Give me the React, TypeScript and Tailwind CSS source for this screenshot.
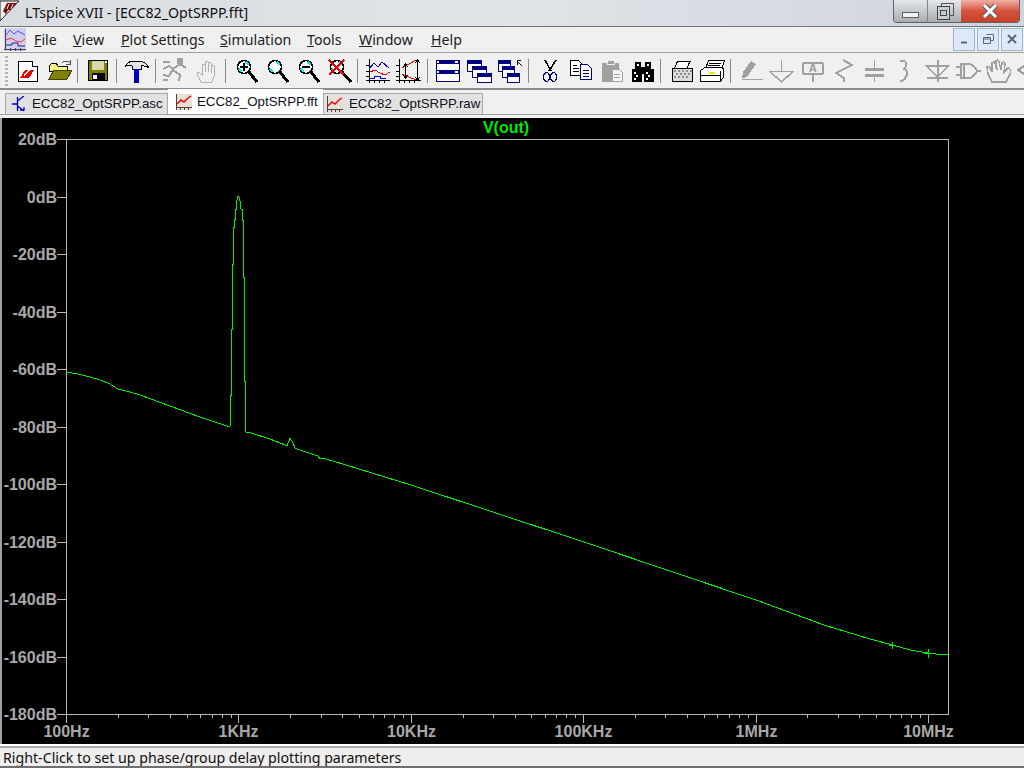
import * as React from 'react'

const G = '#a0a0a0'
const NAVY = '#000080'

// curve points taken off the screenshot, in page pixels
const curve =
  '66,372 78,374 90,377 100,380 108,383 118,389 130,392 140,395 170,406 200,417 215,422 230,427 230.5,395 231.5,395 231.5,329 232.5,329 232.5,264 233.5,264 233.5,227 234.5,227 234.5,219 235.5,219 235.5,209 236.5,209 236.5,202 238,196 239,197 240,201 241,209 242.5,209 242.5,220 243.5,220 243.5,277 244.5,277 244.5,381 245.5,381 245.5,432 251,433 270,439 285,445 287,446 290,438 293,443 295,448 297,449 318,456 320,459 322,458 333,461 411,485 584,542 756,600 824,625 870,639 893,645 910,650 928,653 936,654 948,655'

const yLabels = ['20dB', '0dB', '-20dB', '-40dB', '-60dB', '-80dB', '-100dB', '-120dB', '-140dB', '-160dB', '-180dB']
const xLabels = ['100Hz', '1KHz', '10KHz', '100KHz', '1MHz', '10MHz']
const minors = [2, 3, 4, 5, 6, 7, 8, 9]

const Mag = ({ children, handle = 27 }: { children?: React.ReactNode; handle?: number }) => (
  <>
    <line x1="19" y1="17" x2={handle} y2="27" stroke="#000" strokeWidth="3" />
    <circle cx="14" cy="12" r="6.5" fill="#fff" stroke="#000" strokeWidth="1.5" />
    <path d="M9 14L12 17M16 7L19 10" stroke="#00e8f0" strokeWidth="1.5" fill="none" />
    {children}
  </>
)

const Win = ({ x, y, w, h }: { x: number; y: number; w: number; h: number }) => (
  <>
    <rect x={x + 0.5} y={y + 0.5} width={w} height={h} fill="#fff" stroke={NAVY} />
    <rect x={x} y={y} width={w + 1} height="4" fill={NAVY} />
  </>
)

const icons: React.ReactNode[] = [
  // new schematic
  <>
    <path d="M6.5 6.5H20.5L25.5 11.5V26.5H6.5Z" fill="#fff" stroke="#000" />
    <path d="M20.5 6.5V11.5H25.5" fill="#fff" stroke="#000" />
    <path d="M8 23L13 15H22L17 23Z" fill="#f00000" />
    <path d="M12 20L19 14" stroke="#fff" strokeWidth="1.5" />
  </>,
  // open
  <>
    <path d="M6 11L9 8H13L15 11H24V16H6Z" fill="#f6f67c" stroke="#000" />
    <path d="M6 24L11 15H29L24 24Z" fill="#808000" stroke="#404000" />
    <path d="M19 8Q23 4 27 8M27 5V9H23" stroke="#505050" fill="none" />
  </>,
  // save
  <>
    <rect x="6.5" y="5.5" width="19" height="20" fill="#808000" stroke="#000" />
    <rect x="10" y="6" width="12" height="9" fill="#d8d8b0" />
    <rect x="10" y="18" width="13" height="8" fill="#000" />
    <rect x="11" y="20" width="4" height="4" fill="#fff" />
    <rect x="23" y="6" width="2" height="2" fill="#fff" />
  </>,
  // hammer
  <>
    <path d="M4.5 11Q6 7 12 6H19Q25 7 28 13Q24 10 20 11V14H11V11Q7 9 4.5 11Z" fill="#e4e4e4" stroke="#000" />
    <rect x="13" y="14" width="5" height="14" fill="#0000c8" />
    <rect x="13" y="24" width="2" height="4" fill="#000080" />
  </>,
  // run
  <g stroke={G} strokeWidth="2" fill="none">
    <path d="M3 7H10M3 14L9 11L13 14L20 9L26 13M13 14L9 21L3 20M13 15L20 20L19 26M3 25H8" />
    <rect x="18" y="4" width="4" height="4" fill={G} />
  </g>,
  // halt hand
  <path
    d="M10 27L6 19Q6 16 9 18L11 20V10Q12.5 8 14 10V17V7Q15.5 5 17 7V17V8Q18.5 6 20 8V18V11Q21.5 9 23 11V21L21 27Z"
    fill="#f0f0f0"
    stroke="#b0b0b0"
  />,
  // zoom in, pan, zoom out, zoom cancel
  <Mag>
    <path d="M10 12H18M14 8V16" stroke="#000" strokeWidth="2" />
  </Mag>,
  <Mag />,
  <Mag>
    <path d="M10 12H18" stroke="#000" strokeWidth="2" />
  </Mag>,
  <Mag handle={28}>
    <path d="M6 5L21 20M21 5L6 20" stroke="#f00000" strokeWidth="2" />
  </Mag>,
  // autoscale
  <>
    <path d="M7.5 4V28M4 25.5H28M12.5 25V28M17.5 25V28M22.5 25V28M4 10.5H7M4 16.5H7M4 21.5H7" stroke="#000" fill="none" />
    <polyline points="7,14 12,8 16,12 20,7 27,13" stroke="#0000c0" fill="none" />
    <polyline points="8,17 13,15 18,18 23,20 28,17" stroke="#f00000" fill="none" />
    <polyline points="8,23 12,23 12,21 18,21 18,23 24,23" stroke="#0000c0" fill="none" />
  </>,
  // plot settings
  <>
    <path d="M6.5 4V28M3 25.5H28M11.5 25V28M16.5 25V28M21.5 25V28M3 10.5H6M3 16.5H6M3 21.5H6" stroke="#000" fill="none" />
    <path d="M9 13L23 5M9 19L23 25" stroke="#f00000" fill="none" />
    <path d="M12.5 10V22M10 12L12.5 9L15 12M10 20L12.5 23L15 20M24.5 6V24M22 8L24.5 5L27 8M22 22L24.5 25L27 22" stroke="#000" fill="none" />
  </>,
  // tile
  <>
    <rect x="4.5" y="5.5" width="23" height="21" fill="#fff" stroke={NAVY} />
    <rect x="4" y="5" width="24" height="4" fill={NAVY} />
    <rect x="4" y="15" width="24" height="4" fill={NAVY} />
    <rect x="23" y="6" width="3" height="2" fill="#fff" />
    <rect x="23" y="16" width="3" height="2" fill="#fff" />
    <rect x="5" y="6" width="2" height="2" fill="#fff" />
    <rect x="5" y="16" width="2" height="2" fill="#fff" />
  </>,
  // cascade
  <>
    <Win x={4} y={5} w={14} h={11} />
    <Win x={9} y={11} w={14} h={11} />
    <Win x={14} y={18} w={14} h={9} />
  </>,
  // close all
  <>
    <Win x={4} y={5} w={12} h={11} />
    <Win x={8} y={11} w={12} h={11} />
    <Win x={13} y={18} w={12} h={9} />
    <path d="M28 11L23 6M23.5 10V5.5H27" stroke="#000" fill="none" strokeWidth="1.2" />
  </>,
  // cut
  <>
    <path d="M12 5L18 16M23 5L16 16" stroke="#000" strokeWidth="1.6" />
    <ellipse cx="13.5" cy="22" rx="3" ry="4.5" fill="none" stroke={NAVY} strokeWidth="1.5" />
    <ellipse cx="20.5" cy="22" rx="3" ry="4.5" fill="none" stroke={NAVY} strokeWidth="1.5" />
  </>,
  // copy
  <>
    <path d="M6.5 5.5H14.5L18.5 9.5V20.5H6.5Z" fill="#fff" stroke="#000" />
    <path d="M9 10.5H13M9 13.5H15M9 16.5H15" stroke="#000" />
    <path d="M16.5 9.5H23.5L27.5 13.5V24.5H16.5Z" fill="#fff" stroke={NAVY} />
    <path d="M19 15.5H25M19 18.5H25M19 21.5H25" stroke={NAVY} />
  </>,
  // paste
  <>
    <rect x="7" y="8" width="17" height="19" rx="1" fill={G} />
    <rect x="12" y="5" width="7" height="4" fill={G} stroke="#f0f0f0" />
    <path d="M17.5 14.5H24.5L27.5 17.5V26.5H17.5Z" fill="#f4f4f4" stroke={G} />
    <path d="M19 19.5H25M19 22.5H25" stroke={G} />
  </>,
  // find
  <>
    <rect x="6" y="14" width="10" height="13" fill="#000" />
    <rect x="18" y="14" width="10" height="13" fill="#000" />
    <rect x="9" y="7" width="6" height="8" fill="#000" />
    <rect x="19" y="7" width="6" height="8" fill="#000" />
    <rect x="15" y="12" width="4" height="7" fill="#000" />
    <path d="M8 17h2v2h-2zM10 20h2v2h-2zM8 23h2v2h-2zM20 17h2v2h-2zM22 20h2v2h-2zM20 23h2v2h-2zM11 9h2v2h-2zM21 9h2v2h-2z" fill="#fff" />
  </>,
  // print preview
  <>
    <path d="M12.5 6.5H25L22 13H9.5Z" fill="#fff" stroke="#000" />
    <rect x="7.5" y="13.5" width="20" height="13" rx="1" fill="#dcdcdc" stroke="#000" />
    <path d="M9 15h2v2H9zM13 15h2v2h-2zM17 15h2v2h-2zM21 15h2v2h-2zM25 15h2v2h-2zM11 18h2v2h-2zM15 18h2v2h-2zM19 18h2v2h-2zM23 18h2v2h-2zM9 21h2v2H9zM13 21h2v2h-2zM17 21h2v2h-2zM21 21h2v2h-2z" fill="#909090" />
  </>,
  // print
  <>
    <path d="M12.5 5.5H28.5L26 13.5H9.5Z" fill="#fff" stroke="#000" />
    <path d="M13 8.5H25M12 10.5H24" stroke="#000" />
    <path d="M4.5 15.5L9 12.5H26L27.5 14V22L24.5 26.5H4.5Z" fill="#fff" stroke="#000" />
    <path d="M4.5 20.5H24.5V26M24.5 16V20" stroke="#000" fill="none" />
    <rect x="13" y="17" width="6" height="2" fill="#e8e800" />
  </>,
  // wire
  <>
    <path d="M7 23L8 17L16 6L21 9L12 22Z" fill={G} />
    <rect x="7" y="24" width="21" height="1" fill={G} />
  </>,
  // ground
  <path d="M15.5 5V16M4 16.5H27L15.5 27Z" stroke={G} strokeWidth="1.5" fill="none" />,
  // net label
  <>
    <rect x="6" y="8" width="20" height="11" rx="2" fill="none" stroke={G} strokeWidth="2" />
    <path d="M15.5 19V27" stroke={G} strokeWidth="2" />
    <text x="15.8" y="17" textAnchor="middle" fontFamily="'Liberation Mono', monospace" fontSize="12" fontWeight="700" fill={G}>
      A
    </text>
  </>,
  // resistor
  <polyline points="15,5 24,10 8,18 16,23 16,27" fill="none" stroke={G} strokeWidth="2" />,
  // capacitor
  <path d="M15 5V13H6V15H24V13H15M6 19H24V21H6ZM15 21V27" fill={G} stroke={G} />,
  // inductor
  <path d="M10 6Q17 5 16 10Q16 13 14 14Q19 16 16 22Q14 26 10 26" fill="none" stroke={G} strokeWidth="2" />,
  // diode
  <path d="M16.5 5V27M5 10.5H28L16.5 22ZM6 22.5H27" fill="none" stroke={G} strokeWidth="2" />,
  // component
  <path d="M9 9H16Q22 9 25 16Q22 23 16 23H9ZM4 12H9M4 20H9M25 16H29M12 9V23" fill="none" stroke={G} strokeWidth="2" />,
  // move hand
  <path
    d="M9 27L5 19L4 12Q5 10 7 13L9 17V8Q11 6 12 8L14 15L13 6Q15 4 16 7L18 15L19 8Q21 6 22 9L21 17L25 13Q29 14 27 19L23 27Z"
    fill="none"
    stroke={G}
    strokeWidth="1.5"
  />,
  // rotate, cut off by the window edge
  <polyline points="10,11 4,15 10,19" fill="none" stroke={G} strokeWidth="2" />,
]

// where the separators go, counted in buttons
const groups = [2, 1, 1, 2, 4, 2, 3, 4, 2, 11]

const PlotIcon = ({ big }: { big?: boolean }) =>
  big ? (
    <svg width="22" height="23" viewBox="0 0 22 23" className="shrink-0">
      <rect width="22" height="23" fill="#cfcfe8" />
      <path d="M1.5 1V22M0 21.5H22M6.5 20V23M11.5 20V23M16.5 20V23" stroke="#404060" fill="none" />
      <polyline points="2,7 6,2 10,6 14,3 21,7" stroke="#5050f0" fill="none" />
      <polyline points="2,12 7,10 12,13 17,14 21,11" stroke="#f03030" fill="none" />
      <polyline points="2,17 8,17 8,15 14,15 14,18 21,18" stroke="#2020a0" fill="none" />
    </svg>
  ) : (
    <svg width="16" height="16" viewBox="0 0 16 16" className="shrink-0">
      <rect width="16" height="16" fill="#e8e0d8" />
      <path d="M0.5 0V16M0 13.5H16M4.5 13V16M8.5 13V16M12.5 13V16" stroke="#504040" fill="none" />
      <polyline points="1,10 5,6 8,8 12,4 15,2" stroke="#f00000" fill="none" strokeWidth="1.4" />
    </svg>
  )

const Tab = ({ label, icon, className }: { label: string; icon: React.ReactNode; className: string }) => (
  <div className={`flex items-center text-[#101020] ${className}`}>
    {icon}
    <span>{label}</span>
  </div>
)

const idle = 'h-[21px] gap-[6px] bg-[#e2e2e2] border border-b-0 border-[#a8a8a8]'

export default function App() {
  let next = 0
  return (
    <div className="w-[1024px] h-[768px] flex flex-col overflow-hidden bg-[#f0f0f0] font-['Noto_Sans',sans-serif]">
      {/* window caption */}
      <div className="h-[27px] shrink-0 flex justify-between border-b border-[#70767c] bg-gradient-to-r from-[#d9dde2] via-[#e0e4e8] to-[#cdd4dc]">
        <div className="flex items-start">
          <svg width="20" height="22" viewBox="0 0 20 22" className="shrink-0">
            <path d="M0 1H19L0 21Z" fill="#f4f0f0" stroke="#202020" />
            <path d="M3 11L7 3H17L11 10H8L6 14Z" fill="#7a1010" />
            <path d="M9 4L7 9M13 4L11 9" stroke="#f4f0f0" />
          </svg>
          <span className="ml-[5px] mt-[1px] text-[14.2px] leading-[24px] text-[#101010]">LTspice XVII - [ECC82_OptSRPP.fft]</span>
        </div>
        <div className="flex h-[23px] mr-[4px] rounded-b-[4px] border border-t-0 border-[#5d6268] overflow-hidden">
          <div className="w-[34px] flex items-end justify-center pb-[4px] border-r border-[#7e858c] bg-gradient-to-b from-[#e6e8ea] to-[#a8adb2]">
            <div className="w-[17px] h-[6px] bg-[#f4f4f4] border border-[#5a6068]" />
          </div>
          <div className="w-[33px] flex items-center justify-center bg-gradient-to-b from-[#e6e8ea] to-[#a8adb2]">
            <svg width="18" height="18" viewBox="0 0 18 18">
              <rect x="5.5" y="1.5" width="12" height="12" fill="none" stroke="#555" />
              <rect x="1.5" y="4.5" width="12" height="13" fill="#c8ccd0" stroke="#444" />
              <rect x="4.5" y="8.5" width="6" height="5" fill="none" stroke="#444" />
            </svg>
          </div>
          <div className="w-[58px] flex items-center justify-center bg-gradient-to-b from-[#eeb0a6] via-[#d5523a] to-[#c8402a]">
            <svg width="16" height="14" viewBox="0 0 16 14">
              <path d="M2 1L14 13M14 1L2 13" stroke="#5a5a5a" strokeWidth="5" />
              <path d="M2 1L14 13M14 1L2 13" stroke="#fff" strokeWidth="3" />
            </svg>
          </div>
        </div>
      </div>

      {/* menu */}
      <div className="h-[26px] shrink-0 flex items-start border-b border-[#a0a0a0] text-[14.2px] leading-[25px] text-[#202020]">
        <div className="ml-[4px] mt-[1px]">
          <PlotIcon big />
        </div>
        <div className="ml-[8px] flex">
          <span className="w-[39px]">
            <span className="underline">F</span>ile
          </span>
          <span className="w-[48px]">
            <span className="underline">V</span>iew
          </span>
          <span className="w-[99px]">
            <span className="underline">P</span>lot Settings
          </span>
          <span className="w-[87px]">
            <span className="underline">S</span>imulation
          </span>
          <span className="w-[52px]">
            <span className="underline">T</span>ools
          </span>
          <span className="w-[72px]">
            <span className="underline">W</span>indow
          </span>
          <span>
            <span className="underline">H</span>elp
          </span>
        </div>
        <div className="ml-auto mt-[1px] mr-px flex gap-[2px]">
          {['min', 'restore', 'close'].map(k => (
            <div key={k} className="w-[22px] h-[23px] flex items-center justify-center bg-[#dce9f6] border border-[#a0b4c8]">
              <svg width="13" height="13" viewBox="0 0 13 13" stroke="#5c6a78" fill="none">
                {k === 'min' && <path d="M3 9.5H9" strokeWidth="2" />}
                {k === 'restore' && <path d="M4.5 1.5H11.5V7.5H9M1.5 4.5H8.5V10.5H1.5ZM1.5 6H8.5" />}
                {k === 'close' && <path d="M2 2L10 10M10 2L2 10" strokeWidth="2" />}
              </svg>
            </div>
          ))}
        </div>
      </div>

      {/* toolbar */}
      <div className="h-[37px] shrink-0 flex items-start pt-[2px] pl-[5px] overflow-hidden border-b-2 border-[#8c8c8c]">
        <div className="w-[3px] h-[30px] mt-[1px] mr-[4px] shrink-0 bg-[repeating-linear-gradient(to_bottom,#b4b4b4_0,#b4b4b4_2px,transparent_2px,transparent_4px)]" />
        {groups.map((count, g) => (
          <React.Fragment key={g}>
            {g > 0 && (
              <div className="w-[8px] shrink-0 pl-[3px]">
                <div className="w-px h-[24px] mt-[4px] bg-[#8a8a8a]" />
              </div>
            )}
            {icons.slice(next, (next += count)).map((icon, i) => (
              <svg key={i} width="31" height="32" viewBox="0 0 31 32" shapeRendering="crispEdges" className="shrink-0">
                {icon}
              </svg>
            ))}
          </React.Fragment>
        ))}
      </div>

      {/* document tabs */}
      <div className="h-[28px] shrink-0">
        <div className="h-[25px] flex items-end pl-[5px] border-b border-[#a0a0a0] font-['Liberation_Sans',sans-serif] text-[13.3px]">
          <Tab
            className={`${idle} w-[163px] pl-[6px]`}
            label="ECC82_OptSRPP.asc"
            icon={
              <svg width="14" height="16" viewBox="0 0 14 16" className="shrink-0">
                <path d="M5.5 1V15M0 8H5M5.5 5L12 0M5.5 10L12 15M8 14H12V11" stroke="#0000c0" fill="none" strokeWidth="1.3" />
              </svg>
            }
          />
          <Tab
            className="h-[25px] w-[155px] gap-[5px] pl-[8px] bg-white relative z-10"
            label="ECC82_OptSRPP.fft"
            icon={<PlotIcon />}
          />
          <Tab className={`${idle} w-[160px] pl-[3px]`} label="ECC82_OptSRPP.raw" icon={<PlotIcon />} />
        </div>
      </div>

      {/* plot pane */}
      <div className="flex-1 min-h-0 bg-black border-l-2 border-[#a0a0a0]">
        <svg width="1022" height="626" viewBox="2 118 1022 626" className="block font-['Liberation_Sans',sans-serif]">
          <text x="506" y="133" textAnchor="middle" fontSize="16" fontWeight="700" fill="#00e800">
            V(out)
          </text>
          <rect x="66.5" y="139.5" width="882" height="575" fill="none" stroke="#b8b8b8" shapeRendering="crispEdges" />
          {yLabels.map((label, i) => {
            const y = Math.floor(139.5 + i * 57.5) + 0.5
            return (
              <g key={label}>
                <line x1="57" x2="66" y1={y} y2={y} stroke="#b8b8b8" shapeRendering="crispEdges" />
                <text x="57" y={y + 5} textAnchor="end" fontSize="16" fontWeight="700" fill="#a8a8a8">
                  {label}
                </text>
              </g>
            )
          })}
          {xLabels.map((label, d) => {
            const x = Math.floor(66.5 + d * 172.4) + 0.5
            return (
              <g key={label}>
                <line x1={x} x2={x} y1="714" y2="723" stroke="#b8b8b8" shapeRendering="crispEdges" />
                <text x={x} y="737" textAnchor="middle" fontSize="16" fontWeight="700" fill="#a8a8a8">
                  {label}
                </text>
              </g>
            )
          })}
          {[0, 1, 2, 3, 4].flatMap(d =>
            minors.map(m => {
              const x = Math.floor(66.5 + (d + Math.log10(m)) * 172.4) + 0.5
              return <line key={`${d}-${m}`} x1={x} x2={x} y1="714" y2="718" stroke="#b8b8b8" shapeRendering="crispEdges" />
            }),
          )}
          <polyline points={curve} fill="none" stroke="#00f000" shapeRendering="crispEdges" />
          <path d="M892.5 642V649M889 645.5H896M928.5 649V658M924 653.5H933" stroke="#00f000" shapeRendering="crispEdges" />
        </svg>
      </div>

      {/* status bar */}
      <div className="h-[2px] shrink-0 bg-white" />
      <div className="h-[2px] shrink-0 bg-[#a8a8a8]" />
      <div className="h-[18px] shrink-0 pl-[3px] bg-[#f0eded] text-[14.2px] leading-[20px] text-[#101010]">
        Right-Click to set up phase/group delay plotting parameters
      </div>
      <div className="h-[2px] shrink-0 bg-[#6f6f6f]" />
    </div>
  )
}
